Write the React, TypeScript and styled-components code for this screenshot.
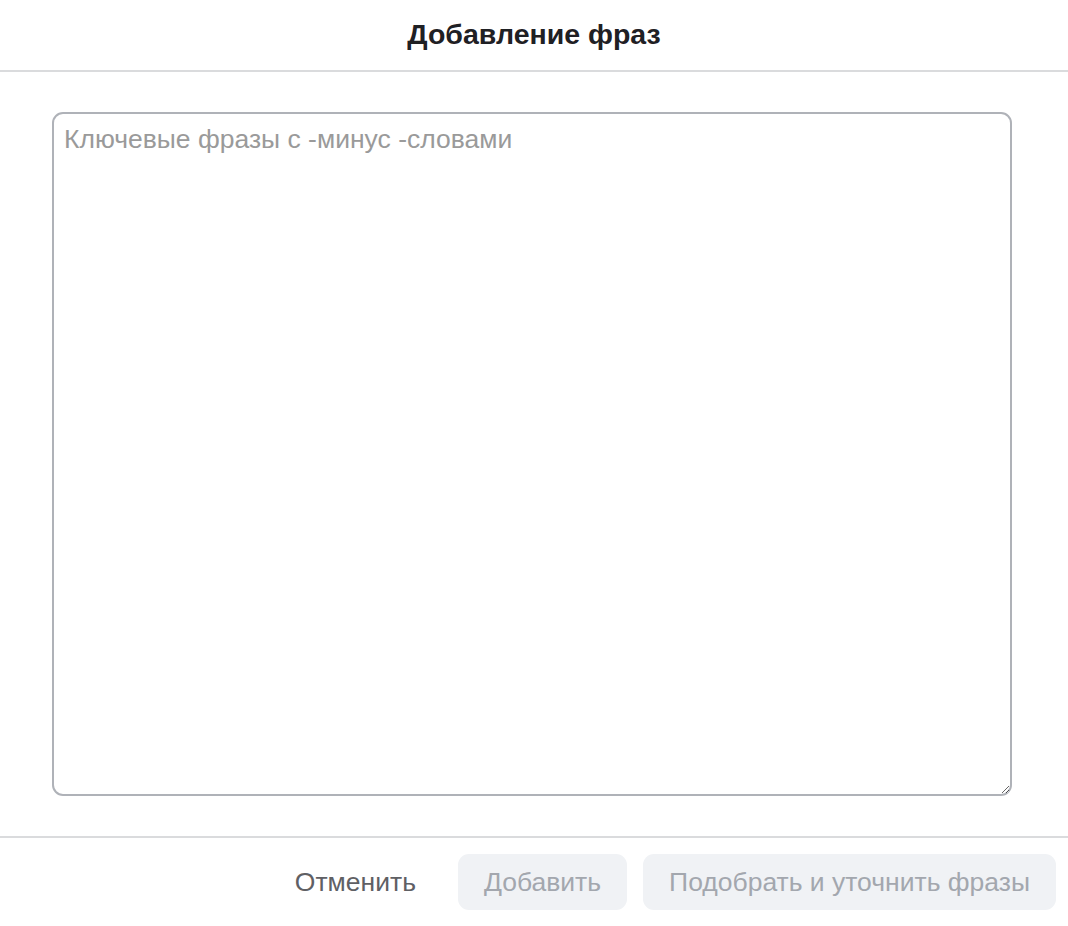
import * as React from 'react';
import styled, { createGlobalStyle } from 'styled-components';

const GlobalStyle = createGlobalStyle`
  html, body {
    margin: 0;
    padding: 0;
    background: #ffffff;
  }
  body {
    font-family: 'Liberation Sans', Arial, sans-serif;
  }
`;

const Modal = styled.div`
  width: 1068px;
  height: 926px;
  display: flex;
  flex-direction: column;
  background: #ffffff;
  box-sizing: border-box;
`;

const Header = styled.div`
  height: 72px;
  flex: none;
  display: flex;
  align-items: center;
  justify-content: center;
  border-bottom: 2px solid #dadbdd;
  box-sizing: border-box;
  padding-bottom: 2px;
`;

const Title = styled.h2`
  margin: 0;
  font-size: 28.5px;
  font-weight: 700;
  color: #1f2024;
`;

const Body = styled.div`
  flex: 1;
  display: flex;
  padding: 40px 56px 40px 52px;
  box-sizing: border-box;
`;

const PhraseInput = styled.textarea`
  flex: 1;
  box-sizing: border-box;
  border: 2px solid #afb2b8;
  border-radius: 11px;
  padding: 9px 10px;
  font-family: 'Liberation Sans', Arial, sans-serif;
  font-size: 26.5px;
  line-height: 32px;
  color: #222;
  resize: vertical;
  outline: none;

  &::placeholder {
    color: #9a9a9a;
  }
`;

const Footer = styled.div`
  height: 90px;
  flex: none;
  display: flex;
  align-items: center;
  justify-content: flex-end;
  gap: 16px;
  padding: 0 12px;
  border-top: 2px solid #dadbdd;
  box-sizing: border-box;
`;

const Button = styled.button<{ $ghost?: boolean }>`
  height: 56px;
  padding: 0 26px;
  border: none;
  border-radius: 11px;
  font-family: 'Liberation Sans', Arial, sans-serif;
  font-size: 26.5px;
  background: ${(p) => (p.$ghost ? 'transparent' : '#f0f2f5')};
  color: ${(p) => (p.$ghost ? '#5f6064' : '#a3a7ae')};
  cursor: ${(p) => (p.$ghost ? 'pointer' : 'default')};
`;

export default function App() {
  const [text, setText] = React.useState('');
  const empty = text.trim().length === 0;

  return (
    <>
      <GlobalStyle />
      <Modal>
        <Header>
          <Title>Добавление фраз</Title>
        </Header>
        <Body>
          <PhraseInput
            value={text}
            onChange={(e) => setText(e.target.value)}
            placeholder="Ключевые фразы с -минус -словами"
          />
        </Body>
        <Footer>
          <Button $ghost>Отменить</Button>
          <Button disabled={empty}>Добавить</Button>
          <Button disabled={empty}>Подобрать и уточнить фразы</Button>
        </Footer>
      </Modal>
    </>
  );
}
